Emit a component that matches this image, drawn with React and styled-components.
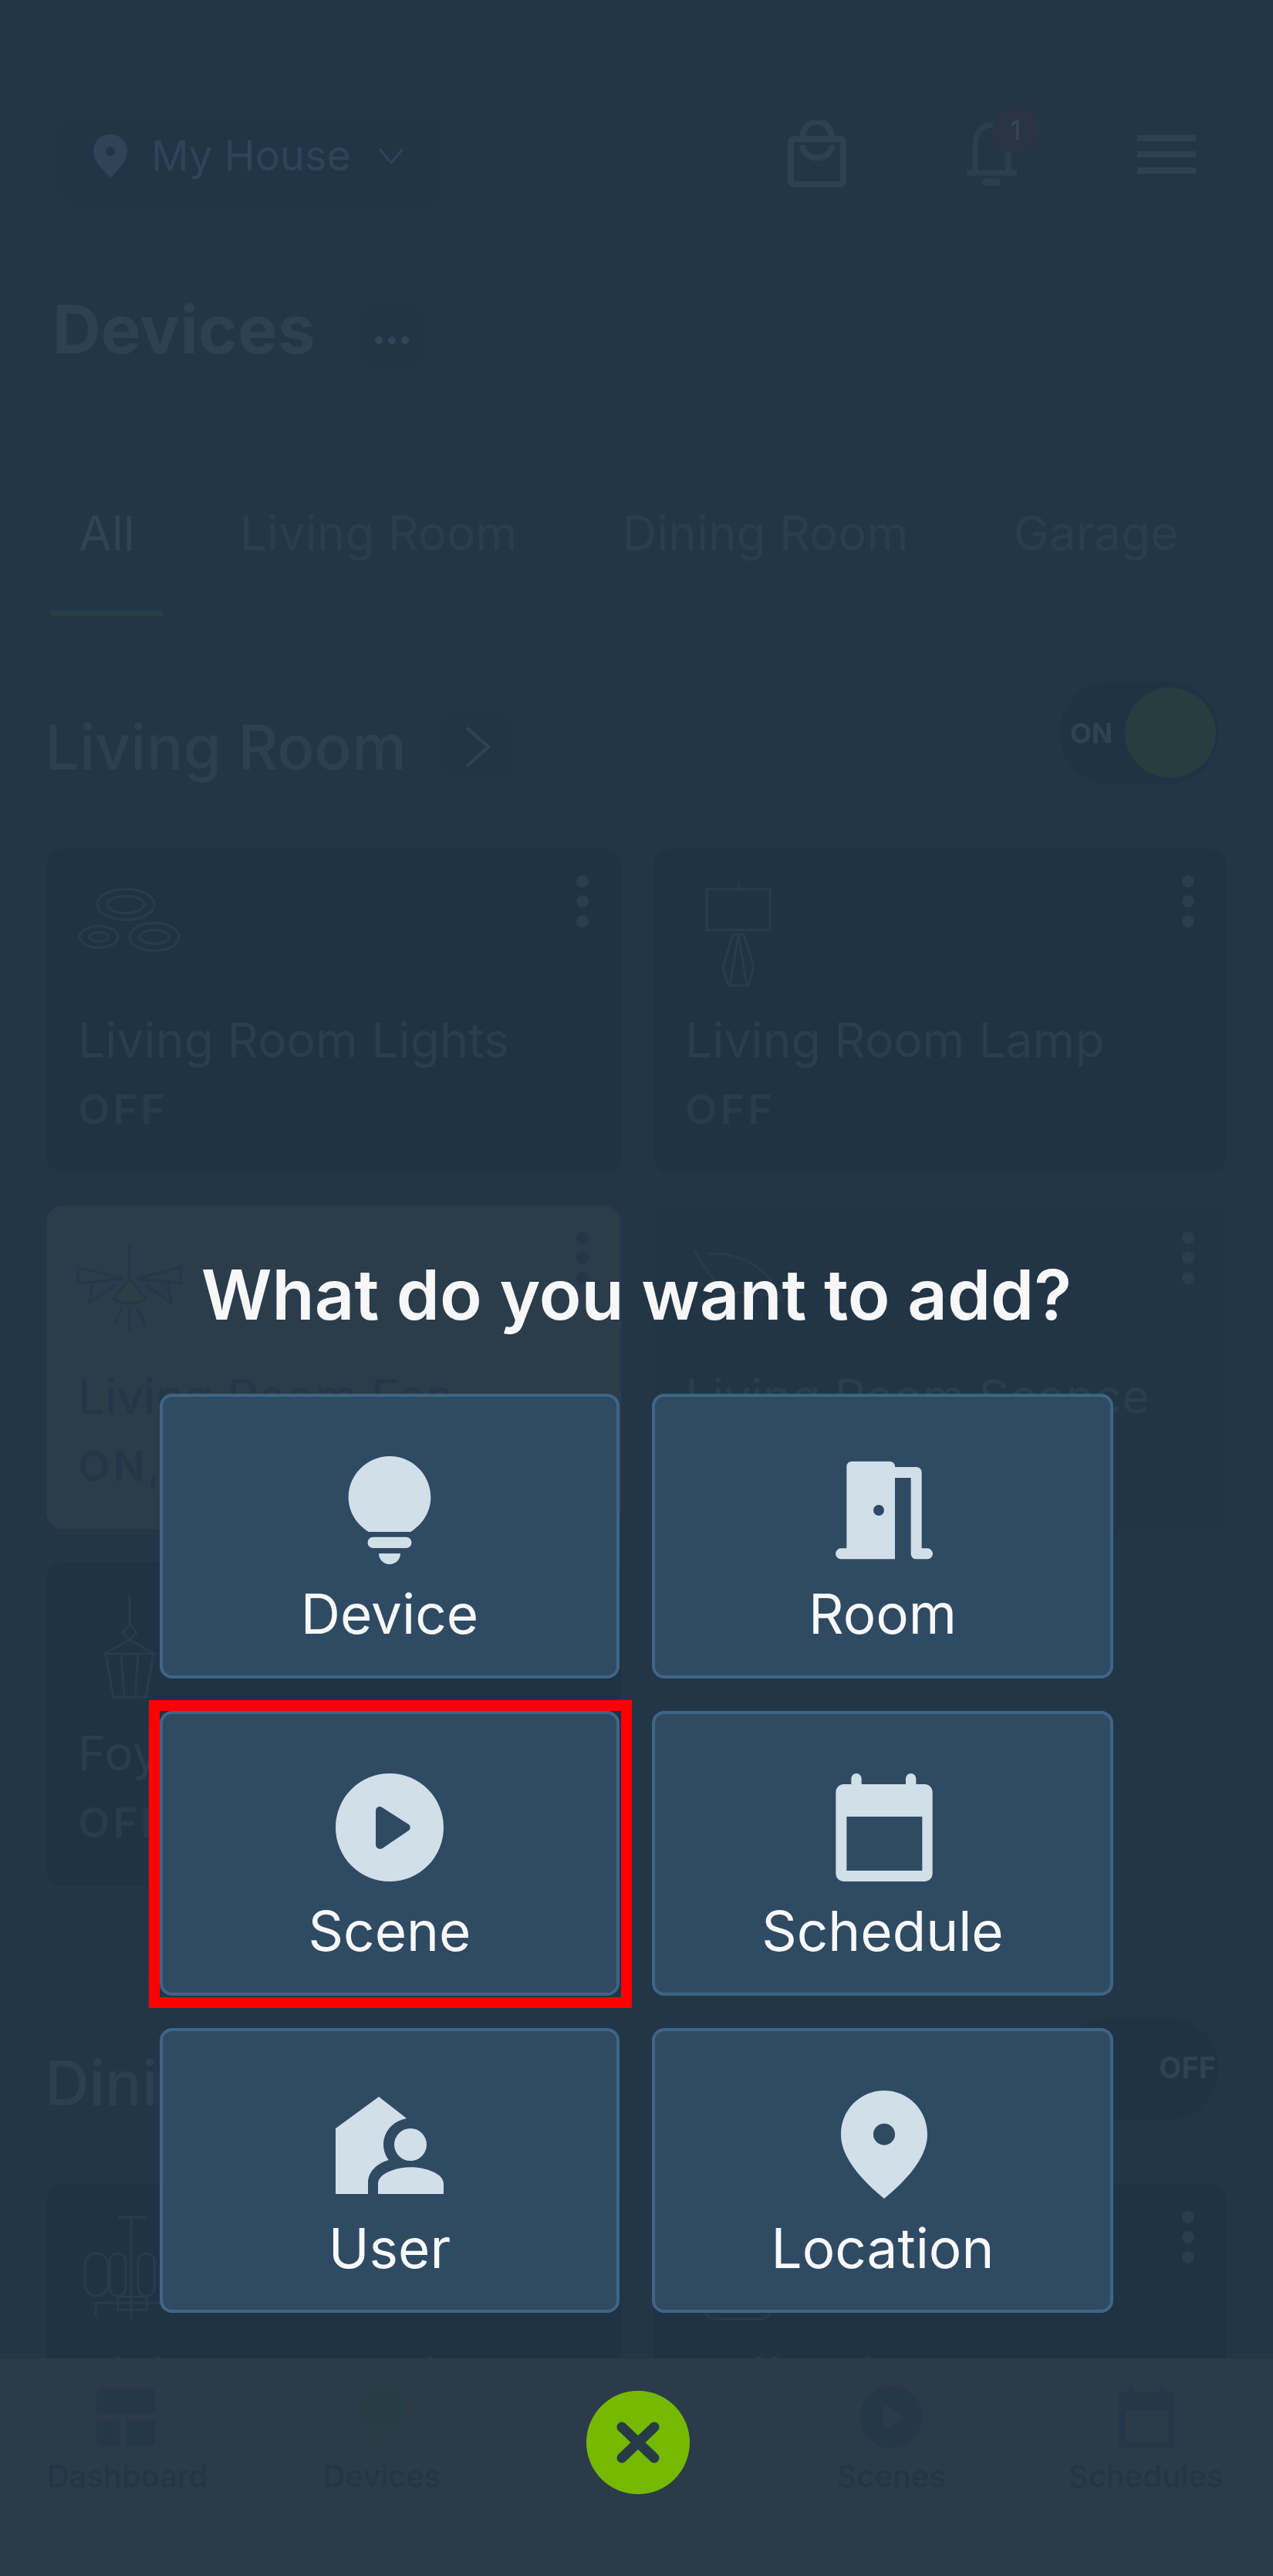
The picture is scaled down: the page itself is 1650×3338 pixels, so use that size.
import React from "react";
import styled, { createGlobalStyle } from "styled-components";

const GlobalStyle = createGlobalStyle`
  html, body {
    margin: 0;
    padding: 0;
    background: #223647;
  }
  * {
    box-sizing: border-box;
  }
`;

const Screen = styled.div`
  position: relative;
  width: 1650px;
  height: 3338px;
  overflow: hidden;
  background: #223647;
  font-family: Inter, "Liberation Sans", sans-serif;
`;

/* dimmed page behind the dialog */
const Header = styled.header`
  display: flex;
  align-items: flex-start;
  justify-content: space-between;
  height: 122px;
  margin-top: 148px;
  padding: 0 100px 0 74px;
`;

const PlacePill = styled.div`
  display: flex;
  align-items: center;
  width: 503px;
  height: 122px;
  padding: 0 0 14px 47px;
  border-radius: 28px;
  background: #213546;
  color: #2f4456;
  font-size: 54px;
  line-height: 60px;
`;

const PlaceName = styled.span`
  margin: 0 36px 0 31px;
`;

const HeaderActions = styled.div`
  display: flex;
  align-items: center;
  gap: 156px;
  margin-top: 8px;
`;

const BellWrap = styled.div`
  position: relative;
  width: 65px;
  height: 83px;
`;

const Badge = styled.span`
  position: absolute;
  top: -19px;
  left: 33px;
  width: 61px;
  height: 59px;
  border-radius: 50%;
  background: #293544;
  color: #3a4857;
  font-size: 34px;
  line-height: 59px;
  text-align: center;
`;

const Burger = styled.div`
  display: flex;
  flex-direction: column;
  gap: 13px;
  width: 76px;
`;

const BurgerBar = styled.span`
  height: 8px;
  background: #2d4152;
`;

const TitleRow = styled.div`
  display: flex;
  align-items: center;
  gap: 52px;
  height: 96px;
  margin-top: 117px;
  padding-left: 68px;
`;

const PageTitle = styled.h1`
  position: relative;
  top: -8px;
  margin: 0;
  color: #2d4152;
  font-size: 87px;
  font-weight: 700;
  line-height: 96px;
`;

const MoreButton = styled.div`
  display: flex;
  align-items: center;
  justify-content: center;
  gap: 7px;
  width: 95px;
  height: 96px;
  padding-top: 12px;
  border-radius: 50%;
  background: #213546;
`;

const MoreDot = styled.span`
  width: 10px;
  height: 10px;
  border-radius: 50%;
  background: #30475a;
`;

const Tabs = styled.nav`
  display: flex;
  gap: 64px;
  height: 158px;
  margin-top: 157px;
  padding-left: 66px;
`;

const Tab = styled.div`
  display: flex;
  align-items: flex-start;
  padding: 15px 36px 0;
  border-bottom: 7px solid ${(props) => (props.$active ? "#263f43" : "transparent")};
  color: ${(props) => (props.$active ? "#2f4455" : "#2a3e4f")};
  font-size: 62px;
  line-height: 72px;
  white-space: nowrap;
`;

const Section = styled.section`
  margin-top: ${(props) => props.$top}px;
`;

const SectionHead = styled.div`
  display: flex;
  align-items: flex-start;
  justify-content: space-between;
  height: 133px;
  padding: 0 71px 0 58px;
`;

const SectionName = styled.div`
  display: flex;
  align-items: center;
  gap: 42px;
  height: 87px;
  margin-top: 41px;
`;

const SectionTitle = styled.h2`
  margin: 0;
  color: #2c4051;
  font-size: 80px;
  font-weight: 500;
  line-height: 87px;
  white-space: nowrap;
`;

const ChevronBox = styled.div`
  display: flex;
  align-items: center;
  justify-content: center;
  width: 100px;
  height: 87px;
  border-radius: 24px;
  background: #213546;
`;

const Toggle = styled.div`
  display: flex;
  align-items: center;
  justify-content: ${(props) => (props.$on ? "space-between" : "flex-end")};
  width: 205px;
  height: 133px;
  padding: ${(props) => (props.$on ? "0 3px 0 13px" : "0 3px 4px 0")};
  border-radius: 66px;
  background: #1f3344;
  color: #2f4354;
  font-size: ${(props) => (props.$on ? 36 : 38)}px;
  font-weight: 700;
`;

const ToggleKnob = styled.span`
  width: 118px;
  height: 117px;
  border-radius: 50%;
  background: #273d40;
`;

const CardGrid = styled.div`
  display: grid;
  grid-template-columns: 745px 743px;
  grid-auto-rows: 420px;
  gap: 42px;
  margin-top: 84px;
  padding-left: 60px;
`;

const cardBackground = { idle: "#1f3344", active: "#2b3c4b", flat: "#213546" };

const Card = styled.article`
  padding: 34px 42px 0 41px;
  border-radius: 22px;
  background: ${(props) => cardBackground[props.$tone]};
`;

const CardHead = styled.div`
  display: flex;
  align-items: flex-start;
  justify-content: space-between;
  height: 177px;
`;

const CardIcon = styled.svg`
  display: block;
  width: 140px;
  height: 140px;
  margin-top: 17px;
  overflow: visible;
  fill: none;
  stroke: ${(props) => (props.$tone === "active" ? "#24384a" : "#283c4d")};
  stroke-width: 3;
`;

const Kebab = styled.div`
  display: flex;
  flex-direction: column;
  gap: 10px;
`;

const KebabDot = styled.span`
  width: 16px;
  height: 16px;
  border-radius: 50%;
  background: ${(props) => (props.$tone === "active" ? "#243748" : "#2a3e4f")};
`;

const CardName = styled.div`
  color: ${(props) => (props.$tone === "active" ? "#243748" : "#2a3e4f")};
  font-size: 62.500px;
  line-height: 72px;
  white-space: nowrap;
`;

const CardStatus = styled.div`
  margin-top: 25px;
  color: ${(props) => (props.$tone === "active" ? "#243748" : "#283c4d")};
  font-size: 54px;
  font-weight: 600;
  letter-spacing: 4px;
  line-height: 60px;
`;

/* bottom tab bar */
const BottomBar = styled.nav`
  position: absolute;
  left: 0;
  right: 0;
  bottom: 0;
  display: grid;
  grid-template-columns: repeat(5, 330px);
  height: 282px;
  background: #2b3b4a;
`;

const BarItem = styled.div`
  display: flex;
  flex-direction: column;
  align-items: center;
  padding-top: 30px;
  color: #243646;
  font-size: 40px;
  font-weight: 500;
  line-height: 48px;
`;

const BarIcon = styled.svg`
  display: block;
  width: 92px;
  height: 92px;
  margin-bottom: 7px;
  fill: ${(props) => props.$color || "#25384a"};
`;

const CloseButton = styled.div`
  display: flex;
  align-items: center;
  justify-content: center;
  justify-self: center;
  width: 134px;
  height: 134px;
  margin: 42px 0 0 4px;
  border-radius: 50%;
  background: #76b900;
`;

/* dialog */
const Dialog = styled.div`
  position: absolute;
  top: 1625px;
  left: 207px;
  width: 1236px;
`;

const DialogTitle = styled.h2`
  margin: 0 0 75px;
  color: #f7f7f7;
  font-size: 90px;
  font-weight: 600;
  line-height: 106px;
  text-align: center;
  white-space: nowrap;
`;

const AddGrid = styled.div`
  display: grid;
  grid-template-columns: 596px 598px;
  grid-auto-rows: 369px;
  gap: 42px;
`;

const AddButton = styled.div`
  position: relative;
  display: flex;
  flex-direction: column;
  align-items: center;
  padding-top: 67px;
  border: 4px solid #3f6587;
  border-radius: 16px;
  background: #2f4b63;
  color: #f8f8f8;
  font-size: 71px;
  line-height: 80px;
`;

const AddIcon = styled.svg`
  display: block;
  width: 160px;
  height: 160px;
  margin-bottom: 14px;
  fill: #d1dfe9;
`;

const Highlight = styled.span`
  position: absolute;
  top: -18px;
  left: -18px;
  right: -20px;
  bottom: -20px;
  border: 14px solid #ff0000;
`;

const icons = {
  bulb: "M7.9 16.2C5.5 14.7 4 12.2 4 9.5 4 5.1 7.6 1.5 12 1.5s8 3.6 8 8c0 2.7-1.5 5.2-3.9 6.7zM8.8 17.2h6.4a1.07 1.07 0 0 1 0 2.15H8.8a1.07 1.07 0 0 1 0-2.15zM9.9 20.4h4.2a2.1 2.1 0 0 1-4.2 0z",
  room: "M3.9 19.4H5V3.5a1 1 0 0 1 1-1h7.4a1 1 0 0 1 1 1v18H3.9a1.05 1.05 0 0 1 0-2.1zM11.25 10.95a1.05 1.05 0 1 0 0 2.1 1.05 1.05 0 0 0 0-2.1zM14.4 3.6h4.2a1 1 0 0 1 1 1v14.8h1.1a1.05 1.05 0 0 1 0 2.1h-2.2a1 1 0 0 1-1-1V5.7h-3.1z",
  scene: "M12 1.5a10.5 10.5 0 1 0 0 21 10.5 10.5 0 0 0 0-21zM9.3 8.8c0-.8.8-1.1 1.4-.6l5 3.2c.4.3.4.9 0 1.2l-5 3.4c-.6.4-1.4.1-1.4-.7z",
  schedule: "M5.9 3.6V2.5a1 1 0 0 1 2 0v1.1h8.6V2.5a1 1 0 0 1 2 0v1.1h1.7a1.5 1.5 0 0 1 1.5 1.5v15.9a1.5 1.5 0 0 1-1.5 1.5H4.4a1.5 1.5 0 0 1-1.5-1.5V5.1a1.5 1.5 0 0 1 1.5-1.5zM5 9.9v10.5h14.7V9.9z",
  user: "M1.5 21.6V8.85L9.9 2.7l5.4 4.2c-2.7.5-4.5 2.6-4.5 5.1 0 1.1.4 2.2 1 3-2.4.7-4 2.4-4 4.4v2.2zM16.05 8.85a3.15 3.15 0 1 0 0 6.3 3.15 3.15 0 0 0 0-6.3zM9.75 21.6v-2c0-2.1 3.75-3.2 6.35-3.2s6.4 1.1 6.4 3.2v2z",
  location: "M12.3 1.5C7.7 1.5 3.9 5.2 3.9 10c0 4.4 3.8 8.7 8.4 12.5 4.6-3.8 8.4-8.1 8.4-12.5 0-4.8-3.8-8.5-8.4-8.5zM12.3 7.9a2.1 2.1 0 1 1 0 4.2 2.1 2.1 0 0 1 0-4.2z",
};

const Glyph = ({ as: Svg, name, ...rest }) => (
  <Svg viewBox="0 0 24 24" {...rest}>
    <path fillRule="evenodd" d={icons[name]} />
  </Svg>
);

const LightsArt = () => (
  <>
    <ellipse cx="62" cy="21" rx="37" ry="20" />
    <ellipse cx="62" cy="21" rx="24" ry="11" />
    <ellipse cx="27" cy="63" rx="25" ry="14" />
    <ellipse cx="27" cy="63" rx="12" ry="6" />
    <ellipse cx="99" cy="63" rx="32" ry="18" />
    <ellipse cx="99" cy="63" rx="19" ry="9" />
  </>
);

const LampArt = () => (
  <>
    <path d="M69-8V1" />
    <rect x="28" y="1" width="82" height="53" />
    <path d="M62 60h14l13 42-7 24H56l-7-24zM69 60 58 126M69 60l11 66" />
  </>
);

const FanArt = () => (
  <>
    <path d="M67 0v44M0 29l57 15-57 6zM133 29 77 44l56 6zM19 52l-5 23 35-23M117 52l4 23-34-23" />
    <path d="M67 44 46 70q21 12 42 0z" fill="#2a4044" stroke="#24384a" />
    <path d="m47 102 10-20M67 112V82M87 102 77 82" />
  </>
);

const SconceArt = () => <path d="M12 8 50 66M30 12c40-4 80 18 95 60M50 66c20-8 50-4 75 6" />;

const FoyerArt = () => (
  <path d="M67-8v38M67 30l9 10-9 10-9-10zM67 50 34 68h65zM36 68l10 56h42l10-56M56 68l4 56M78 68l-4 56M44 124h46" />
);

const ChandelierArt = () => (
  <>
    <path d="M52-9h37M69-9v132M23 102h87M23 102v18" />
    <rect x="9" y="38" width="30" height="55" rx="15" />
    <rect x="41" y="38" width="21" height="55" rx="10" />
    <rect x="78" y="38" width="21" height="55" rx="10" />
    <rect x="52" y="94" width="37" height="17" />
  </>
);

const BuffetArt = () => <rect x="24" y="40" width="89" height="83" rx="16" />;

const livingRoom = [
  { name: "Living Room Lights", status: "OFF", art: <LightsArt />, tone: "idle" },
  { name: "Living Room Lamp", status: "OFF", art: <LampArt />, tone: "idle" },
  { name: "Living Room Fan", status: "ON, 100%", art: <FanArt />, tone: "active" },
  { name: "Living Room Sconce", status: "OFF", art: <SconceArt />, tone: "flat" },
  { name: "Foyer Light", status: "OFF", art: <FoyerArt />, tone: "idle" },
];

const diningRoom = [
  { name: "Dining Chandelier", status: "OFF", art: <ChandelierArt />, tone: "idle" },
  { name: "Buffet Light", status: "OFF", art: <BuffetArt />, tone: "idle" },
];

const addOptions = [
  { label: "Device", icon: "bulb" },
  { label: "Room", icon: "room" },
  { label: "Scene", icon: "scene", marked: true },
  { label: "Schedule", icon: "schedule" },
  { label: "User", icon: "user" },
  { label: "Location", icon: "location" },
];

const DeviceCard = ({ name, status, art, tone }) => (
  <Card $tone={tone}>
    <CardHead>
      <CardIcon viewBox="0 0 140 140" $tone={tone}>
        {art}
      </CardIcon>
      <Kebab>
        <KebabDot $tone={tone} />
        <KebabDot $tone={tone} />
        <KebabDot $tone={tone} />
      </Kebab>
    </CardHead>
    <CardName $tone={tone}>{name}</CardName>
    <CardStatus $tone={tone}>{status}</CardStatus>
  </Card>
);

export default function App() {
  return (
    <Screen>
      <GlobalStyle />
      <Header>
        <PlacePill>
          <svg width="44" height="56" viewBox="0 0 44 56">
            <path
              fill="#2f4557"
              fillRule="evenodd"
              d="M22 0C10 0 0 9.500 0 22c0 11 10 23 22 34 12-11 22-23 22-34C44 9.500 34 0 22 0zm0 16a6 6 0 1 1 0 12 6 6 0 0 1 0-12z"
            />
          </svg>
          <PlaceName>My House</PlaceName>
          <svg width="32" height="20" viewBox="0 0 32 20" fill="none" stroke="#2f4456" strokeWidth="3">
            <path d="M1 1l15 18L31 1" />
          </svg>
        </PlacePill>
        <HeaderActions>
          <svg width="76" height="87" viewBox="0 0 76 87" fill="none" stroke="#2d4152" strokeWidth="8">
            <rect x="4" y="24" width="68" height="59" rx="4" />
            <path d="M19 24C19-6 57-6 57 24M19 32c0 22 38 22 38 0" />
          </svg>
          <BellWrap>
            <svg width="65" height="83" viewBox="0 0 65 83" fill="none" stroke="#2b3f50" strokeWidth="7">
              <path d="M11 64V32C11 14 20 4 32 4s22 10 22 28v32M0 66h65" />
              <path d="M25 78h14" strokeLinecap="round" strokeWidth="10" />
            </svg>
            <Badge>1</Badge>
          </BellWrap>
          <Burger>
            <BurgerBar />
            <BurgerBar />
            <BurgerBar />
          </Burger>
        </HeaderActions>
      </Header>

      <TitleRow>
        <PageTitle>Devices</PageTitle>
        <MoreButton>
          <MoreDot />
          <MoreDot />
          <MoreDot />
        </MoreButton>
      </TitleRow>

      <Tabs>
        <Tab $active>All</Tab>
        <Tab>Living Room</Tab>
        <Tab>Dining Room</Tab>
        <Tab>Garage</Tab>
      </Tabs>

      <Section $top={85}>
        <SectionHead>
          <SectionName>
            <SectionTitle>Living Room</SectionTitle>
            <ChevronBox>
              <svg width="34" height="54" viewBox="0 0 34 54" fill="none" stroke="#2f4354" strokeWidth="4">
                <path d="M3 2l28 25L3 52" />
              </svg>
            </ChevronBox>
          </SectionName>
          <Toggle $on>
            ON
            <ToggleKnob />
          </Toggle>
        </SectionHead>
        <CardGrid>
          {livingRoom.map((device) => (
            <DeviceCard key={device.name} {...device} />
          ))}
        </CardGrid>
      </Section>

      <Section $top={170}>
        <SectionHead>
          <SectionName>
            <SectionTitle>Dining Room</SectionTitle>
          </SectionName>
          <Toggle>OFF</Toggle>
        </SectionHead>
        <CardGrid>
          {diningRoom.map((device) => (
            <DeviceCard key={device.name} {...device} />
          ))}
        </CardGrid>
      </Section>

      <BottomBar>
        <BarItem>
          <BarIcon viewBox="0 0 92 92">
            <path d="M13 8h62a7 7 0 0 1 7 7v26H6V15a7 7 0 0 1 7-7zM6 49h30v35H13a7 7 0 0 1-7-7zM45 49h37v28a7 7 0 0 1-7 7H45z" />
          </BarIcon>
          Dashboard
        </BarItem>
        <BarItem>
          <Glyph as={BarIcon} name="bulb" $color="#273d45" />
          Devices
        </BarItem>
        <CloseButton>
          <svg width="56" height="54" viewBox="0 0 56 54" fill="none" stroke="#273b47" strokeWidth="13" strokeLinecap="round">
            <path d="M7 7l42 40M49 7L7 47" />
          </svg>
        </CloseButton>
        <BarItem>
          <Glyph as={BarIcon} name="scene" />
          Scenes
        </BarItem>
        <BarItem>
          <Glyph as={BarIcon} name="schedule" />
          Schedules
        </BarItem>
      </BottomBar>

      <Dialog>
        <DialogTitle>What do you want to add?</DialogTitle>
        <AddGrid>
          {addOptions.map((option) => (
            <AddButton key={option.label}>
              <Glyph as={AddIcon} name={option.icon} />
              {option.label}
              {option.marked && <Highlight />}
            </AddButton>
          ))}
        </AddGrid>
      </Dialog>
    </Screen>
  );
}
